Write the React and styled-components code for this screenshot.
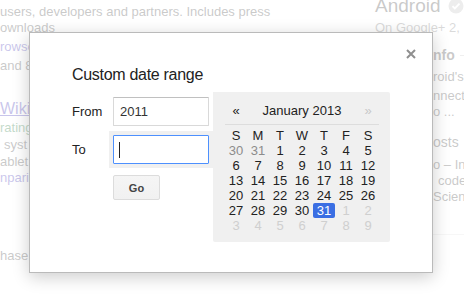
import React from "react";
import styled, { createGlobalStyle } from "styled-components";

const GlobalStyle = createGlobalStyle`
  html, body {
    margin: 0;
    padding: 0;
    background: #fff;
  }
  body {
    font-family: "Liberation Sans", Arial, sans-serif;
  }
`;

const Page = styled.div`
  position: relative;
  width: 464px;
  height: 304px;
  overflow: hidden;
  display: flex;
  font-size: 13px;
  color: #222;
`;

/* --- the search page behind the dialog --- */

const Results = styled.div`
  flex: 1;
  display: flex;
  flex-direction: column;
  white-space: nowrap;
`;

const tones = {
  text: "#222",
  link: "#1a0dab",
  url: "#006621",
  muted: "#666",
};

const Line = styled.div`
  margin-top: ${(p) => p.$mt || 0}px;
  margin-left: ${(p) => p.$ml || 0}px;
  line-height: 16px;
  color: ${(p) => tones[p.$tone || "text"]};
`;

const ResultTitle = styled.div`
  margin-top: ${(p) => p.$mt || 0}px;
  font-size: 16px;
  line-height: 20px;
  color: ${tones.link};
  text-decoration: underline;
`;

const Panel = styled.div`
  width: 89px;
  flex-shrink: 0;
  display: flex;
  flex-direction: column;
  white-space: nowrap;
`;

const PanelTitle = styled.div`
  display: flex;
  align-items: center;
  gap: 7px;
  margin-top: -4px;
  font-size: 19px;
  line-height: 20px;
`;

const PanelBody = styled.div`
  margin-left: 58px;
  display: flex;
  flex-direction: column;
`;

const PanelHeading = styled.div`
  display: flex;
  align-items: center;
  gap: 5px;
  margin-top: ${(p) => p.$mt || 0}px;
  font-size: 14px;
  font-weight: ${(p) => (p.$bold ? 700 : 400)};
  line-height: 16px;
  &::after {
    content: "";
    flex: 1;
    border-top: 1px solid #bbb;
  }
`;

const Divider = styled.div`
  margin-top: ${(p) => p.$mt || 0}px;
  border-top: 1px solid #ddd;
`;

/* --- dialog --- */

const Scrim = styled.div`
  position: absolute;
  inset: 0;
  background: rgba(255, 255, 255, 0.76);
`;

const Dialog = styled.div`
  position: absolute;
  left: 29px;
  top: 32px;
  width: 404px;
  box-sizing: border-box;
  padding: 32px 41px 30px 42px;
  background: #fff;
  border: 1px solid rgba(0, 0, 0, 0.27);
  box-shadow: 0 4px 16px rgba(0, 0, 0, 0.2);
  color: #222;
`;

const CloseButton = styled.div`
  position: absolute;
  top: 14px;
  right: 16px;
  width: 10px;
  height: 10px;
  cursor: pointer;
`;

const Title = styled.div`
  font-size: 16px;
  line-height: 20px;
  letter-spacing: -0.3px;
  margin-bottom: 7px;
`;

const Body = styled.div`
  display: flex;
  align-items: flex-start;
`;

const Form = styled.div`
  width: 141px;
  display: flex;
  flex-direction: column;
  gap: 1px;
  padding-top: 1px;
`;

const FieldRow = styled.div`
  display: flex;
  align-items: center;
`;

const Label = styled.label`
  width: 37px;
  flex-shrink: 0;
  font-size: 13px;
`;

const Well = styled.div`
  position: relative;
  flex: 1;
  padding: 4px 5px 4px 4px;
  background: ${(p) => (p.$active ? "#f0f0f0" : "transparent")};
`;

const Input = styled.input`
  display: block;
  width: 96px;
  height: 29px;
  box-sizing: border-box;
  margin: 0;
  padding: 0 6px;
  font-family: "Liberation Sans", Arial, sans-serif;
  font-size: 13px;
  color: #333;
  background: #fff;
  border: 1px solid ${(p) => (p.$active ? "#4d90fe" : "#d9d9d9")};
  border-top-color: ${(p) => (p.$active ? "#4d90fe" : "#c0c0c0")};
  border-radius: 1px;
  outline: none;
  caret-color: transparent;
`;

const Caret = styled.span`
  position: absolute;
  left: 10px;
  top: 11px;
  width: 1px;
  height: 16px;
  background: #222;
`;

const GoButton = styled.button`
  margin: 6px 0 0 41px;
  width: 47px;
  height: 25px;
  box-sizing: border-box;
  padding: 0;
  font-family: "Liberation Sans", Arial, sans-serif;
  font-size: 11px;
  font-weight: 700;
  color: #444;
  background: linear-gradient(#f5f5f5, #f1f1f1);
  border: 1px solid #dcdcdc;
  border-radius: 2px;
`;

const Calendar = styled.div`
  width: 177px;
  box-sizing: border-box;
  padding: 11px 11px 9px 12px;
  background: #f0f0f0;
  border-radius: 0 2px 2px 2px;
`;

const MonthBar = styled.div`
  display: flex;
  line-height: 16px;
  padding-bottom: 5px;
  border-bottom: 1px solid #ddd;
  font-size: 13px;
`;

const Nav = styled.span`
  width: 22px;
  text-align: center;
  color: ${(p) => (p.$off ? "#c8c8c8" : "#222")};
`;

const Month = styled.span`
  flex: 1;
  text-align: center;
`;

const Grid = styled.div`
  margin-top: 3px;
  display: grid;
  grid-template-columns: repeat(7, 22px);
  grid-auto-rows: 15px;
  line-height: 15px;
  font-size: 13px;
  text-align: center;
`;

const dayTones = {
  head: "#222",
  day: "#222",
  other: "#8c8c8c",
  disabled: "#cfcfcf",
};

const Day = styled.span`
  color: ${(p) => (p.$selected ? "#fff" : dayTones[p.$tone])};
  background: ${(p) => (p.$selected ? "#3a6ee3" : "transparent")};
  border-radius: 2px;
`;

const VerifiedIcon = () => (
  <svg width="16" height="16" viewBox="0 0 16 16">
    <circle cx="8" cy="8" r="7.5" fill="#b5b5b5" />
    <path d="M4.5 8.2l2.3 2.3 4.7-4.8" stroke="#fff" strokeWidth="1.8" fill="none" />
  </svg>
);

const CloseIcon = () => (
  <svg width="10" height="10" viewBox="0 0 10 10">
    <path d="M1 1l8 8M9 1l-8 8" stroke="#8f8f8f" strokeWidth="2" />
  </svg>
);

function buildDays() {
  const days = [];
  [30, 31].forEach((d) => days.push({ d, tone: "other" }));
  for (let d = 1; d <= 31; d++) days.push({ d, tone: "day", selected: d === 31 });
  for (let d = 1; d <= 9; d++) days.push({ d, tone: "disabled" });
  return days;
}

const weekdays = ["S", "M", "T", "W", "T", "F", "S"];

export default function App() {
  const days = buildDays();
  return (
    <Page>
      <GlobalStyle />
      <Results>
        <Line $mt={4}>users, developers and partners. Includes press</Line>
        <Line>ownloads</Line>
        <Line $mt={3} $tone="link">rowse</Line>
        <Line $mt={3}>and 8</Line>
        <ResultTitle $mt={25}>Wiki</ResultTitle>
        <Line $mt={1} $tone="url">rating</Line>
        <Line $mt={1} $ml={4}>syst</Line>
        <Line $mt={1}>ablet</Line>
        <Line $tone="link">npari</Line>
        <Line $mt={62}>hase</Line>
      </Results>
      <Panel>
        <PanelTitle>
          Android
          <VerifiedIcon />
        </PanelTitle>
        <Line $mt={4} $tone="muted">On Google+ 2,</Line>
        <PanelBody>
          <PanelHeading $mt={11} $bold>nfo</PanelHeading>
          <Line $mt={6}>roid's</Line>
          <Line $mt={3}>nnect</Line>
          <Line>o ...</Line>
          <PanelHeading $mt={14}>osts</PanelHeading>
          <Line $mt={7}>o – In</Line>
          <Line $ml={5}>code</Line>
          <Line>Scienc</Line>
          <Divider $mt={29} />
        </PanelBody>
      </Panel>

      <Scrim />
      <Dialog>
        <CloseButton>
          <CloseIcon />
        </CloseButton>
        <Title>Custom date range</Title>
        <Body>
          <Form>
            <FieldRow>
              <Label>From</Label>
              <Well>
                <Input defaultValue="2011" />
              </Well>
            </FieldRow>
            <FieldRow>
              <Label>To</Label>
              <Well $active>
                <Input $active defaultValue="" />
                <Caret />
              </Well>
            </FieldRow>
            <GoButton>Go</GoButton>
          </Form>
          <Calendar>
            <MonthBar>
              <Nav>«</Nav>
              <Month>January 2013</Month>
              <Nav $off>»</Nav>
            </MonthBar>
            <Grid>
              {weekdays.map((w, i) => (
                <Day key={"w" + i} $tone="head">
                  {w}
                </Day>
              ))}
              {days.map((day, i) => (
                <Day key={i} $tone={day.tone} $selected={day.selected}>
                  {day.d}
                </Day>
              ))}
            </Grid>
          </Calendar>
        </Body>
      </Dialog>
    </Page>
  );
}
